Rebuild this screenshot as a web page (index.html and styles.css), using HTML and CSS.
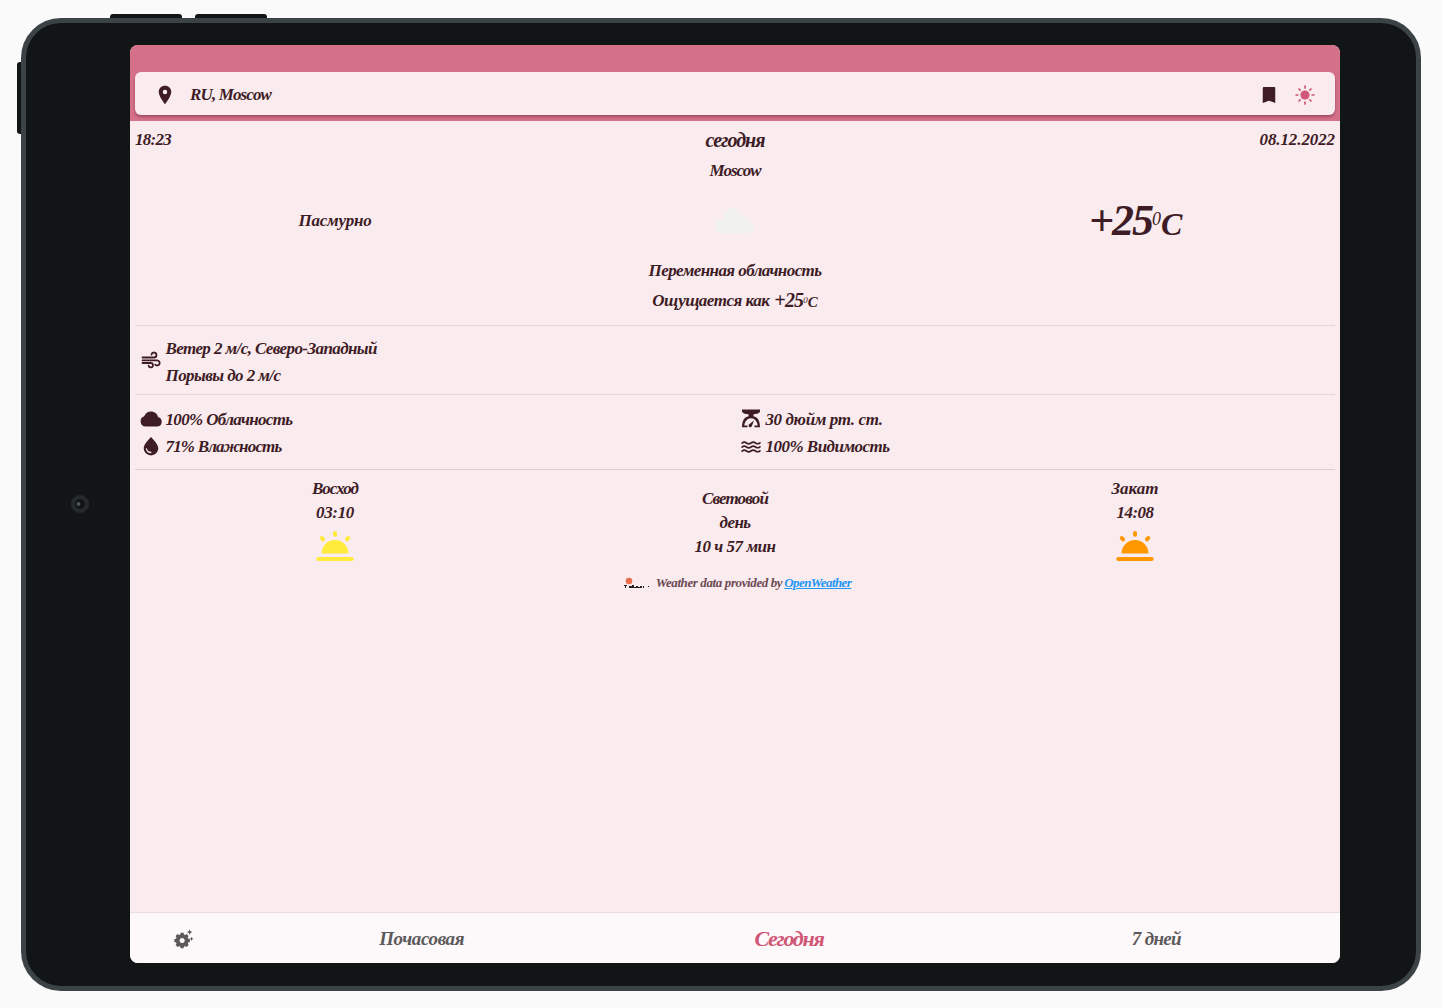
FILE: index.html
```html
<!DOCTYPE html>
<html lang="ru"><head><meta charset="utf-8"><title>Погода</title><link rel="stylesheet" href="styles.css"></head>
<body>
<div class="device">
  <i class="key key-a"></i><i class="key key-b"></i><i class="key key-c"></i><i class="lens"></i>
  <main class="screen">
    <header class="top">
      <div class="search">
        <svg class="pin" viewBox="0 0 24 24"><path d="M12 1C7.600 1 4.500 4.200 4.500 8.300 4.500 13.800 12 23 12 23s7.500-9.200 7.500-14.700C19.500 4.200 16.400 1 12 1zm0 10a2.700 2.700 0 1 1 0-5.400 2.700 2.700 0 0 1 0 5.400z"/></svg>
        <span class="place"><span class="t-place">RU, Moscow</span></span>
        <svg class="mark" viewBox="0 0 24 24"><path d="M18 2.500H6c-1 0-1.500.5-1.500 1.500v17.500L12 18.800l7.500 2.700V4c0-1-.5-1.500-1.500-1.500z"/></svg>
        <svg class="sun" viewBox="0 0 24 24"><circle cx="12" cy="12" r="5.500"/><path d="M12 1.300v2.200M12 20.500v2.200M1.300 12h2.200M20.500 12h2.200M4.800 4.800l1.400 1.400M17.800 17.800l1.400 1.400M4.800 19.200l1.400-1.400M17.800 6.200l1.400-1.400"/></svg>
      </div>
    </header>
    <section class="weather">
      <div class="meta"><span class="t-time">18:23</span><span class="t-today">сегодня</span><span class="t-date">08.12.2022</span></div>
      <div class="row"><span class="t-city">Moscow</span></div>
      <div class="now">
        <span class="t-sky">Пасмурно</span>
        <svg class="cloud" viewBox="0 0 40 26"><path d="M7 25a7 7 0 0 1-1-14.500C7.500 9 7 9.500 8.500 9.500 8.700 4 12 0 17.500 0c4 0 7 2.500 8 6.600 4.500-.6 7.500 2 7.200 6.900 4 .2 6.800 2.500 6.800 6 0 3.200-2.500 5.500-6 5.500z"/></svg>
        <span class="temp"><span class="t-temp">+25</span><span class="deg">0</span><span class="unit">C</span></span>
      </div>
      <div class="row"><span class="t-desc">Переменная облачность</span></div>
      <div class="row feels"><span class="t-feels">Ощущается как</span><span class="feel-temp"><span class="t-feelnum">+25</span><span class="deg">0</span><span class="unit">C</span></span></div>
      <div class="wind">
        <svg class="ico" viewBox="0 0 24 24"><path class="line" d="M3.500 9.500h11.500a2.500 2.500 0 1 0-2.500-3M3.500 12.300h14.500a2.600 2.600 0 1 1-1.800 4.400M3.500 15h8.300a2.200 2.200 0 1 1-2.200 2.600"/></svg>
        <div class="lines"><p><span class="t-wind">Ветер 2 м/с, Северо-Западный</span></p><p><span class="t-gust">Порывы до 2 м/с</span></p></div>
      </div>
      <div class="facts">
        <div class="fact"><svg class="ico" viewBox="0 0 24 24"><path d="M6.500 18.500a5.300 5.300 0 0 1-1.300-10.300C6.500 5.300 8.700 3.500 12 3.500c3.500 0 6.300 2.300 7 5.400a4.900 4.900 0 0 1-.5 9.600z"/></svg><span class="t-clouds">100% Облачность</span></div>
        <div class="fact"><svg class="ico" viewBox="0 0 24 24"><path d="M3 1.500h18v2.300c-1.400 2-3.800 2.400-6.500 2.500v2c4 .7 6.500 4.500 6.500 11h-5.500v-1.700h3.200c-.4-4-3-7.300-6.700-7.300s-6.300 3.300-6.700 7.300h3.200v1.700H3c0-6.500 2.500-10.300 6.500-11v-2C6.800 6.200 4.400 5.800 3 3.800zM10.500 16l4.500-3.500-2 5.200a1.700 1.700 0 1 1-2.500-1.700z"/></svg><span class="t-press">30 дюйм рт. ст.</span></div>
        <div class="fact"><svg class="ico" viewBox="0 0 24 24"><path fill-rule="evenodd" d="M12 2S4.700 8.800 4.700 13.200a7.300 7.300 0 0 0 14.600 0C19.300 8.800 12 2 12 2zM7.800 13.200c.5 2.300 2 3.500 4.500 3.600v1.500C9 18.200 7 16.200 6.800 13.200z"/></svg><span class="t-humid">71% Влажность</span></div>
        <div class="fact"><svg class="ico" viewBox="0 0 24 24"><path class="line waves" d="M3 8.200c1.500-1.500 3-1.300 4.500-.2s3 1.100 4.500 0 3-1.100 4.500 0 3 1.100 4.500-.2M3 12.200c1.500-1.500 3-1.300 4.500-.2s3 1.100 4.500 0 3-1.100 4.500 0 3 1.100 4.500-.2M3 16.200c1.500-1.500 3-1.300 4.500-.2s3 1.100 4.500 0 3-1.100 4.500 0 3 1.100 4.500-.2"/></svg><span class="t-vis">100% Видимость</span></div>
      </div>
      <div class="day">
        <div class="event rise"><span class="t-rise">Восход</span><span class="t-risetime">03:10</span><svg viewBox="0 0 38 32"><path d="M5.500 23.500a13.500 13.500 0 0 1 27 0z"/><path class="rays" d="M2.300 29h33.400M19 3v1.800M5.800 8l1.200 1.400M32.200 8L31 9.400"/></svg></div>
        <div class="length"><span class="t-light">Световой</span><span class="t-day">день</span><span class="t-len">10 ч 57 мин</span></div>
        <div class="event set"><span class="t-set">Закат</span><span class="t-settime">14:08</span><svg viewBox="0 0 38 32"><path d="M5.500 23.500a13.500 13.500 0 0 1 27 0z"/><path class="rays" d="M2.300 29h33.400M19 3v1.800M5.800 8l1.200 1.400M32.200 8L31 9.400"/></svg></div>
      </div>
      <div class="credit">
        <svg viewBox="0 0 28 12"><circle class="ball" cx="6" cy="4" r="3.300"/><path d="M1 8h3v1H3v2H2V9H1zM6 9h3V8h2v2h2V9h2v1h2v1H6zM17 9h2v2h-2zM20 9h1v2h-1zM25 9h1v1h-1z"/></svg>
        <span class="t-credit">Weather data provided by</span><a class="t-link">OpenWeather</a>
      </div>
    </section>
    <nav class="tabs">
      <svg viewBox="0 0 24 24"><g transform="translate(9.500 13) scale(1.250)"><path fill-rule="evenodd" d="M-1.500-7.500h3l.5 1.800 1.200.5 1.700-.9 2 2-.9 1.700.5 1.200 1.800.5v3l-1.800.5-.5 1.200.9 1.700-2 2-1.700-.9-1.200.5-.5 1.800h-3l-.5-1.800-1.200-.5-1.700.9-2-2 .9-1.700-.5-1.200-1.800-.5v-3l1.800-.5.5-1.200-.9-1.700 2-2 1.700.9 1.200-.5zM2.700.8a2.700 2.700 0 1 0-5.400 0 2.700 2.700 0 0 0 5.400 0z"/></g><path d="M19.500-1l1.100 2.700 2.700 1.100-2.700 1.100-1.100 2.700-1.100-2.700-2.700-1.100 2.700-1.100zM22 9l.8 2 2 .8-2 .8-.8 2-.8-2-2-.8 2-.8z"/></svg>
      <span><span class="t-hourly">Почасовая</span></span><span class="active"><span class="t-now">Сегодня</span></span><span><span class="t-week">7 дней</span></span>
    </nav>
  </main>
</div>
</body></html>
```

FILE: styles.css
```css
*{box-sizing:border-box}
body{margin:0;background:#fafafa;font:italic bold 17px/24px "Liberation Serif",serif;color:#3e1c26;padding:18px 21px;height:1008px;overflow:hidden}
p{margin:0}
svg{display:block;fill:currentColor;overflow:visible}
span,a{white-space:pre}
.device{position:relative;width:1400px;height:973px;border:5px solid #3c4346;border-radius:40px;background:#111516;padding:22px 75px 22px 104px}
.key{position:absolute;background:#111516}
.key-a{left:84px;top:-9px;width:72px;height:4px;border-radius:3px 3px 0 0}
.key-b{left:169px;top:-9px;width:72px;height:4px;border-radius:3px 3px 0 0}
.key-c{left:-9px;top:39px;width:4px;height:72px;border-radius:3px 0 0 3px}
.lens{position:absolute;left:45px;top:472px;width:18px;height:18px;border-radius:50%;border:4px solid #262a2b;background:radial-gradient(circle at 3.5px 5px,#4c585c 1.5px,#111516 2.2px)}
.screen{width:1210px;height:918px;border-radius:8px;overflow:hidden;background:#faebef;display:flex;flex-direction:column}
.top{height:76px;background:#d57089;padding:27px 5px 0}
.search{height:43px;border-radius:6px;background:#faebef;display:flex;align-items:center;padding:2px 20px 0;box-shadow:0 2px 3px rgba(80,20,40,.4)}
.search svg{width:20px;height:20px}
.place{margin-left:15px;flex:1}
.search .sun{margin-left:16px;color:#d05675}
.sun path{stroke:currentColor;stroke-width:2;stroke-linecap:round}
.weather{flex:1;padding:4px 5px 0}
.meta{display:grid;grid-template-columns:repeat(3,1fr);justify-items:center;height:30px;align-items:center;margin-bottom:1px}
.t-time{justify-self:start}
.t-date{justify-self:end}
.t-today{font-size:20px}
.row{height:30px;display:flex;align-items:center;justify-content:center}
.now{display:grid;grid-template-columns:repeat(3,1fr);height:70px;place-items:center}
.cloud{width:40px;color:#f1f2ef}
.temp{font-size:44px;line-height:60px;display:flex;align-items:baseline;padding-top:2px}
.temp .deg{font-size:18px;font-weight:400;line-height:20px;align-self:center;padding-bottom:6px}
.temp .unit{font-size:32px;width:20px}
.feels{gap:5px}
.feel-temp{font-size:20px;display:flex;align-items:baseline}
.feel-temp .deg{font-size:9px;align-self:center;font-weight:400;line-height:10px;padding-bottom:3px}
.feel-temp .unit{font-size:15px}
.wind{margin-top:9px;height:69px;border-top:1px solid #e6d5db;display:flex;align-items:center;padding-left:3.5px}
.lines{padding-top:5px}
.ico{width:24px;height:24px;margin-right:3px}
.line{fill:none;stroke:currentColor;stroke-width:1.8;stroke-linecap:round}
.waves{stroke-width:1.6}
.wind p,.fact{height:27px;display:flex;align-items:center}
.facts{height:76px;border-top:1px solid #e6d5db;border-bottom:1px solid #dfcdd4;display:grid;grid-template-columns:1fr 1fr;align-content:center;padding-top:2px}
.fact{padding-left:3.5px}
.day{display:grid;grid-template-columns:repeat(3,1fr);height:105px}
.day>div{display:flex;flex-direction:column;align-items:center}
.event{padding-top:7px}
.event svg{width:38px;height:32px;margin-top:5px}
.length{padding-top:17px}
.rise svg{color:#ffeb3b}
.set svg{color:#ff9800}
.rays{stroke:currentColor;stroke-width:4;stroke-linecap:round}
.credit{display:flex;justify-content:center;align-items:center;height:16px;font-size:13px;color:#6b4a54;padding-left:4px}
.credit svg{width:28px;height:12px;margin-right:5px;color:#222}
.ball{fill:#eb6e4b}
.t-link{color:#2196f3;text-decoration:underline;margin-left:2px}
.tabs{height:51px;border-top:1px solid #ecdde2;background:#fdf8fa;display:grid;grid-template-columns:108px 1fr 1fr 1fr;place-items:center;color:#5c595a;font-size:19px;padding-top:2px}
.tabs svg{width:18px;height:18px}
.tabs .active{font-size:22px;color:#d05675}

/* Tightened tracking, per label */
.t-place{letter-spacing:-.87px}
.t-time{letter-spacing:-.74px}
.t-today{letter-spacing:-1px}
.t-date{letter-spacing:-.1px}
.t-city{letter-spacing:-1.1px}
.t-sky{letter-spacing:-.2px}
.t-temp{letter-spacing:-2px}
.t-desc{letter-spacing:-.57px}
.t-feels{letter-spacing:-.5px}
.t-feelnum{letter-spacing:-.8px}
.t-wind{letter-spacing:-.59px}
.t-gust{letter-spacing:-.57px}
.t-clouds{letter-spacing:-.65px}
.t-press{letter-spacing:-.39px}
.t-humid{letter-spacing:-.82px}
.t-vis{letter-spacing:-.52px}
.t-rise{letter-spacing:-1px}
.t-risetime{letter-spacing:-.34px}
.t-light{letter-spacing:-.86px}
.t-day{letter-spacing:-.55px}
.t-len{letter-spacing:-.47px}
.t-settime{letter-spacing:-.5px}
.t-credit{letter-spacing:-.39px}
.t-link{letter-spacing:-.58px}
.t-hourly{letter-spacing:-.38px}
.t-now{letter-spacing:-1.27px}
.t-week{letter-spacing:-.7px}
```
